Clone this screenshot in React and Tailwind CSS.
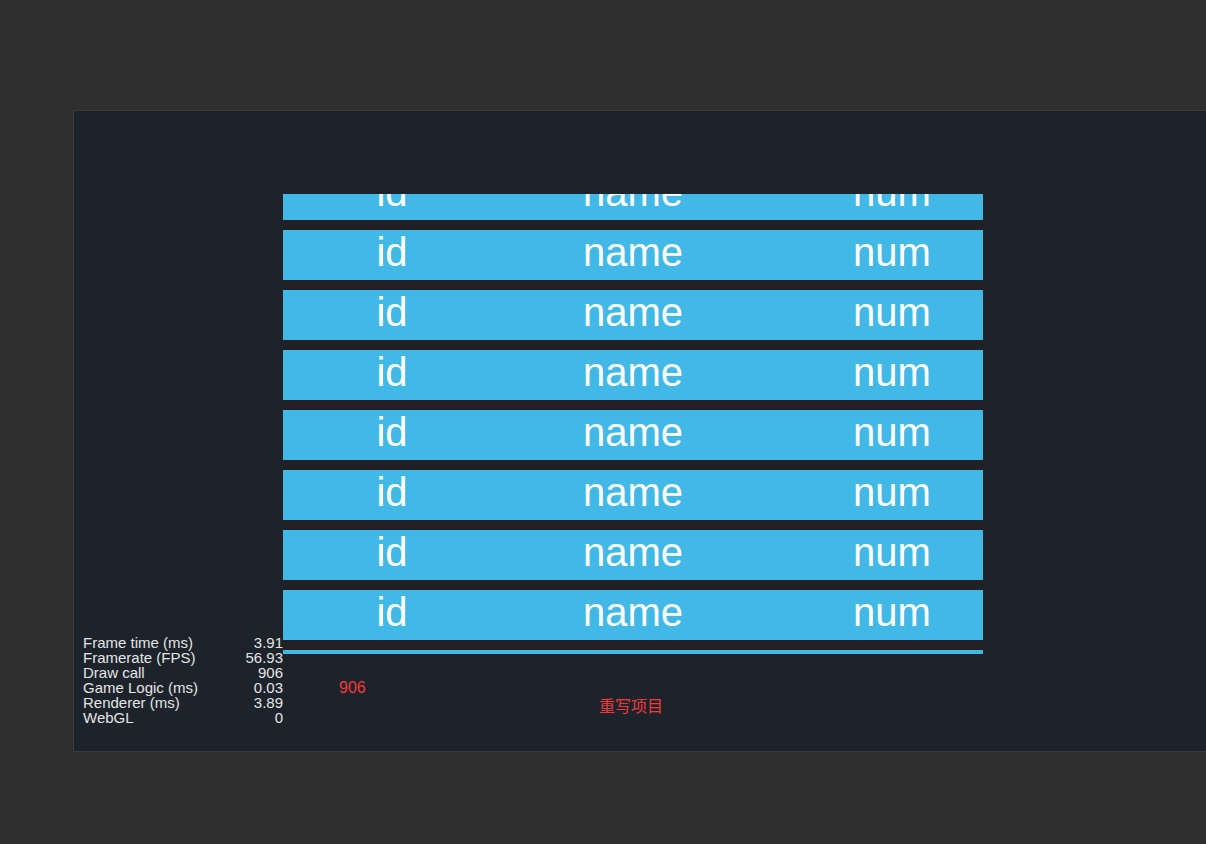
const ROWS = Array.from({ length: 10 }, (_, i) => i)

const STATS = [
  ['Frame time (ms)', '3.91'],
  ['Framerate (FPS)', '56.93'],
  ['Draw call', '906'],
  ['Game Logic (ms)', '0.03'],
  ['Renderer (ms)', '3.89'],
  ['WebGL', '0'],
]

function Row() {
  return (
    <div className="h-[50px] mb-[10px] pt-[2px] bg-[#41b8e5] flex text-white text-[40px] leading-[40px]">
      <span className="w-[218px] text-center">id</span>
      <span className="w-[264px] text-center">name</span>
      <span className="w-[182px] ml-[36px] text-center">num</span>
    </div>
  )
}

export default function App() {
  return (
    <div
      className="w-[1206px] h-[844px] bg-[#2f2f2f] pt-[110px] pl-[73px] overflow-hidden"
      style={{ fontFamily: '"Liberation Sans", Arial, sans-serif' }}
    >
      <div className="relative w-[1200px] h-[642px] border border-[#3a3a3a] bg-[#1d232b] overflow-hidden">
        {/* list view */}
        <div className="ml-[209px] mt-[83px] w-[700px] h-[460px] bg-[#222022] overflow-hidden">
          <div className="-mt-[24px]">
            {ROWS.map((i) => (
              <Row key={i} />
            ))}
          </div>
        </div>

        {/* debug stats overlay */}
        <div className="absolute left-[9px] top-[524px] w-[200px] text-[15px] leading-[15px] text-[#e4e4e4]">
          {STATS.map(([label, val]) => (
            <div key={label} className="flex justify-between">
              <span>{label}</span>
              <span>{val}</span>
            </div>
          ))}
        </div>

        <div className="absolute left-[265px] top-[569px] text-[16px] leading-[16px] text-[#f23a3a]">906</div>
        <div
          className="absolute left-[525px] top-[586px] text-[16px] leading-[16px] text-[#f23a3a]"
          style={{ fontFamily: '"Noto Sans CJK SC", sans-serif' }}
        >
          重写项目
        </div>
      </div>
    </div>
  )
}
